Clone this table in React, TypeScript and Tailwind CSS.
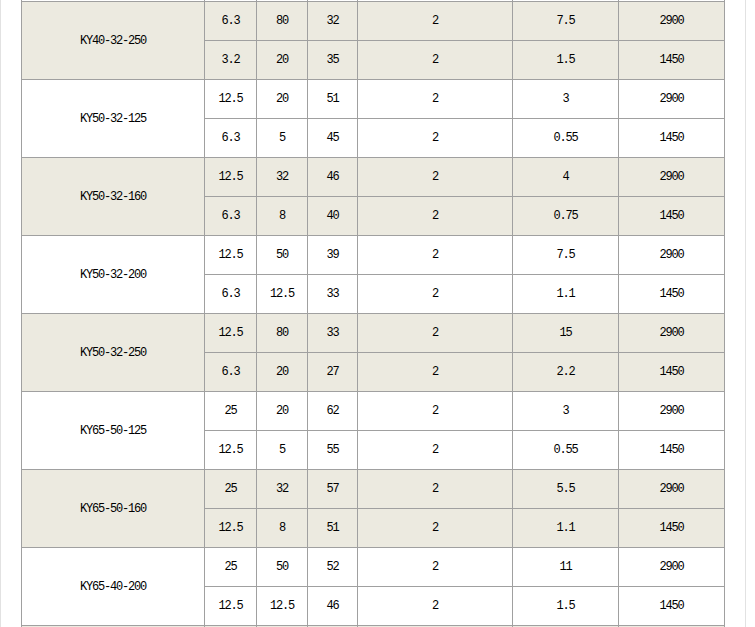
import React from "react";

type Row = [string, string, string, string, string, string];
type Model = { name: string; rows: [Row, Row] };

const models: Model[] = [
  { name: "KY40-32-250", rows: [["6.3", "80", "32", "2", "7.5", "2900"], ["3.2", "20", "35", "2", "1.5", "1450"]] },
  { name: "KY50-32-125", rows: [["12.5", "20", "51", "2", "3", "2900"], ["6.3", "5", "45", "2", "0.55", "1450"]] },
  { name: "KY50-32-160", rows: [["12.5", "32", "46", "2", "4", "2900"], ["6.3", "8", "40", "2", "0.75", "1450"]] },
  { name: "KY50-32-200", rows: [["12.5", "50", "39", "2", "7.5", "2900"], ["6.3", "12.5", "33", "2", "1.1", "1450"]] },
  { name: "KY50-32-250", rows: [["12.5", "80", "33", "2", "15", "2900"], ["6.3", "20", "27", "2", "2.2", "1450"]] },
  { name: "KY65-50-125", rows: [["25", "20", "62", "2", "3", "2900"], ["12.5", "5", "55", "2", "0.55", "1450"]] },
  { name: "KY65-50-160", rows: [["25", "32", "57", "2", "5.5", "2900"], ["12.5", "8", "51", "2", "1.1", "1450"]] },
  { name: "KY65-40-200", rows: [["25", "50", "52", "2", "11", "2900"], ["12.5", "12.5", "46", "2", "1.5", "1450"]] },
];

export default function App() {
  return (
    <div className="h-[627px] w-[755px] overflow-hidden bg-white">
      <div className="h-[627px] w-[746px] border-x border-[#e2e2e2] overflow-hidden">
        <div
          className="ml-[20px] grid w-[704px] gap-px bg-[#a0a0a0] px-px text-[12px] leading-none tracking-[-1.2px] text-black"
          style={{
            fontFamily: '"Liberation Mono", "DejaVu Sans Mono", monospace',
            gridTemplateColumns: "182px 51px 50px 49px 154px 105px 105px",
            gridTemplateRows: "1px repeat(17, 38px)",
          }}
        >
          {Array.from({ length: 7 }).map((_, i) => (
            <div key={"top" + i} className="bg-white" />
          ))}
          {models.map((m, mi) => {
            const bg = mi % 2 === 0 ? "bg-[#eceae0]" : "bg-white";
            return (
              <React.Fragment key={m.name}>
                <div className={`${bg} row-span-2 flex items-center justify-center`}>{m.name}</div>
                {m.rows[0].map((v, i) => (
                  <div key={"a" + i} className={`${bg} flex items-center justify-center`}>{v}</div>
                ))}
                {m.rows[1].map((v, i) => (
                  <div key={"b" + i} className={`${bg} flex items-center justify-center`}>{v}</div>
                ))}
              </React.Fragment>
            );
          })}
          {Array.from({ length: 7 }).map((_, i) => (
            <div key={"bot" + i} className="bg-[#eceae0]" />
          ))}
        </div>
      </div>
    </div>
  );
}
